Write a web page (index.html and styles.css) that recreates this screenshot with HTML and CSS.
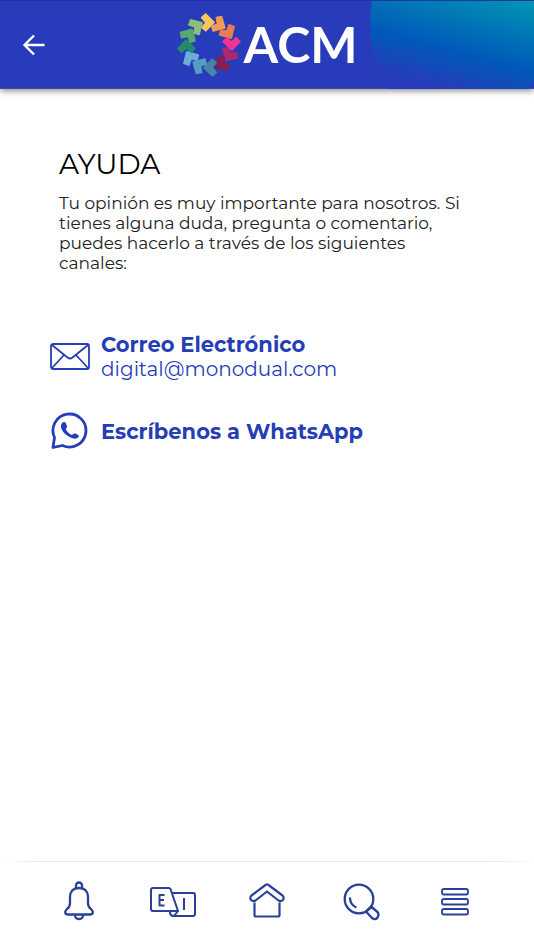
FILE: index.html
```html
<!DOCTYPE html>
<html lang="es">
<head>
  <meta charset="UTF-8">
  <meta name="viewport" content="width=device-width, initial-scale=1.0">
  <title>ACM - Ayuda</title>
  <link rel="stylesheet" href="styles.css">
</head>
<body>
  <header class="topbar">
    <svg class="topbar-shape" width="164" height="88" viewBox="0 0 164 88" aria-hidden="true">
      <defs>
        <linearGradient id="shape-fill" gradientUnits="userSpaceOnUse" x1="112" y1="-22" x2="82" y2="92">
          <stop offset="0" stop-color="#009db3"/>
          <stop offset="0.65" stop-color="#0059b9"/>
          <stop offset="1" stop-color="#283bba"/>
        </linearGradient>
      </defs>
      <ellipse cx="88" cy="23" rx="88" ry="109" fill="url(#shape-fill)"/>
    </svg>
    <button class="back" type="button" aria-label="Volver">
      <svg width="24" height="24" viewBox="0 0 24 24" fill="none" stroke="#fff" stroke-width="2.4">
        <path d="M22.500 12H3M12 2.500L2.500 12L12 21.500"/>
      </svg>
    </button>
    <div class="logo">
      <svg width="64" height="64" viewBox="20 22 192 192" aria-hidden="true">
        <defs>
          <path id="arrow" d="M107 23L133 48Q134 50 133 52L108 77Q106 79 104 77L93 66Q92 64 93 63L104 51L92 37Q91 35 92 34L105 23Q106 22 107 23Z"/>
        </defs>
        <use href="#arrow" fill="#f8c45c"/>
        <use href="#arrow" fill="#f19c56" transform="rotate(30 116 118)"/>
        <use href="#arrow" fill="#ea7c50" transform="rotate(60 116 118)"/>
        <use href="#arrow" fill="#ee3594" transform="rotate(90 116 118)"/>
        <use href="#arrow" fill="#ab2a6d" transform="rotate(120 116 118)"/>
        <use href="#arrow" fill="#84204f" transform="rotate(150 116 118)"/>
        <use href="#arrow" fill="#4685a5" transform="rotate(180 116 118)"/>
        <use href="#arrow" fill="#569dc4" transform="rotate(210 116 118)"/>
        <use href="#arrow" fill="#6badd8" transform="rotate(240 116 118)"/>
        <use href="#arrow" fill="#228b6b" transform="rotate(270 116 118)"/>
        <use href="#arrow" fill="#57a773" transform="rotate(300 116 118)"/>
        <use href="#arrow" fill="#8ebf78" transform="rotate(330 116 118)"/>
      </svg>
      <span class="logo-text">ACM</span>
    </div>
  </header>

  <main class="content">
    <h1>AYUDA</h1>
    <p class="intro">Tu opinión es muy importante para nosotros. Si tienes alguna duda, pregunta o comentario, puedes hacerlo a través de los siguientes canales:</p>

    <div class="channels">
      <a class="channel" href="mailto:digital@monodual.com">
        <svg width="42" height="40" viewBox="0 0 42 40" fill="none" stroke="#263eb5" stroke-width="1.8" stroke-linejoin="round">
          <rect x="2" y="7" width="38" height="25" rx="2"/>
          <path d="M3 8L18.500 20.500Q21 22.500 23.500 20.500L39 8M3 31L15 18M39 31L27 18"/>
        </svg>
        <span class="channel-text"><strong>Correo Electrónico</strong><span class="channel-detail">digital@monodual.com</span></span>
      </a>
      <a class="channel" href="https://wa.me/">
        <svg width="42" height="40" viewBox="0 0 42 40">
          <path d="M4 35.500L5.500 25.500A16.500 16.500 0 1 1 13.500 33.500Z" fill="none" stroke="#263eb5" stroke-width="2.800" stroke-linejoin="round"/>
          <path d="M13.500 10.500Q15 9.500 16.500 10.500L18 14Q18.300 15.500 16.800 17Q18.500 21 23 23Q24.500 21 26.500 21.500L29.500 23.200Q30.700 24.500 28.500 26Q25.500 27.500 21.500 25.500Q15 22.500 12.500 17Q11 12.500 13.500 10.500Z" fill="#263eb5"/>
        </svg>
        <span class="channel-text"><strong>Escríbenos a WhatsApp</strong></span>
      </a>
    </div>
  </main>

  <nav class="tabbar">
    <a href="#notificaciones" aria-label="Notificaciones">
      <svg width="48" height="42" viewBox="0 0 48 42" fill="none" stroke="#2a4198" stroke-width="2.3" stroke-linejoin="round">
        <path d="M21 8V5.500A3 3 0 0 1 27 5.500V8"/>
        <path d="M24 8C18 8 15 12 15 17V23Q15 27 12 29C9 32 10 34.500 13 34.500H35C38 34.500 39 32 36 29Q33 27 33 23V17C33 12 30 8 24 8Z"/>
        <path d="M20 35Q20 39 24 39T28 35"/>
      </svg>
    </a>
    <a href="#idioma" aria-label="Idioma">
      <svg width="48" height="42" viewBox="0 0 48 42" fill="none" stroke="#2a4198" stroke-width="2" stroke-linejoin="round">
        <path d="M4 8H19.500Q21 8 21.500 9L29 31H4Q2 31 2 29V10Q2 8 4 8Z"/>
        <path d="M23 13H44Q46 13 46 15V34Q46 36 44 36H24Q21 35.500 21 32M29 31L25 36"/>
        <path d="M15.500 15H10.500V25.500H15.500M10.500 20H15M35 18V30"/>
      </svg>
    </a>
    <a href="#inicio" aria-label="Inicio">
      <svg width="48" height="42" viewBox="0 0 48 42" fill="none" stroke="#2a4198" stroke-width="2.2" stroke-linejoin="round">
        <path d="M22.500 5Q24 3.800 25.500 5L39.500 15.500Q41.500 17.500 40 20Q38 22 35.500 20.500L24 11.500L12.500 20.500Q10 22 8 20Q6.500 17.500 8.500 15.500Z"/>
        <path d="M11.500 22.500V35Q11.500 36.500 13 36.500H35Q36.500 36.500 36.500 35V22.500"/>
      </svg>
    </a>
    <a href="#buscar" aria-label="Buscar">
      <svg width="48" height="42" viewBox="0 0 48 42" fill="none" stroke="#2a4198" stroke-width="2.3">
        <circle cx="22" cy="19" r="14.300"/>
        <path d="M13 18.500Q13.500 24.500 18.500 27" stroke-linecap="round"/>
        <path d="M29 31.500L34 26.500L40.500 32Q42.500 34.500 40.500 37.500T35 38Z" stroke-linejoin="round"/>
      </svg>
    </a>
    <a href="#menu" aria-label="Menú">
      <svg width="48" height="42" viewBox="0 0 48 42" fill="none" stroke="#2a4198" stroke-width="1.8">
        <rect x="11" y="9" width="26" height="5.500" rx="2"/>
        <rect x="11" y="19" width="26" height="5.500" rx="2"/>
        <rect x="11" y="29" width="26" height="5.500" rx="2"/>
      </svg>
    </a>
  </nav>
</body>
</html>
```
FILE: styles.css
```css
* {
  box-sizing: border-box;
}
body {
  font-family: 'Montserrat', 'Inter', Arial, sans-serif;
  margin: 0;
  min-height: 100vh;
  background: #fff;
  display: flex;
  flex-direction: column;
}
.topbar {
  position: relative;
  display: grid;
  grid-template-columns: 1fr auto 1fr;
  align-items: center;
  height: 89px;
  padding: 0 22px;
  background: #283bba;
  border-top: 1px solid #2433a0;
  border-bottom: 1px solid #3a4aa8;
  box-shadow: 0 2px 6px rgba(0, 0, 0, 0.45);
}
.topbar-shape {
  position: absolute;
  top: 0;
  right: 0;
}
.back {
  width: 24px;
  height: 24px;
  padding: 0;
  border: 0;
  background: none;
  cursor: pointer;
}
.back svg {
  display: block;
}
.logo {
  position: relative;
  display: flex;
  align-items: center;
  gap: 3px;
}
.logo-text {
  font-family: 'Lato', sans-serif;
  font-size: 50px;
  font-weight: 700;
  line-height: 62px;
  padding-bottom: 2px;
  color: #fff;
}
.content {
  flex: 1;
  padding: 56px 58px 0 59px;
}
h1 {
  margin: 0;
  font-size: 28px;
  font-weight: 400;
  line-height: 38px;
  color: #000;
}
.intro {
  margin: 10px 0 0;
  font-size: 17px;
  font-weight: 400;
  line-height: 20px;
  color: #222;
}
.channels {
  display: flex;
  flex-direction: column;
  gap: 27px;
  margin: 60px 0 0 -10px;
}
.channel {
  display: flex;
  align-items: center;
  gap: 10px;
  min-height: 48px;
  color: #263eb5;
  text-decoration: none;
}
.channel-text {
  display: flex;
  flex-direction: column;
  font-size: 21px;
  line-height: 24px;
}
.channel-text strong {
  font-weight: 700;
}
.channel-detail {
  font-size: 20px;
}
.tabbar {
  display: flex;
  height: 89px;
  padding: 0 32px;
  border-top: 1px solid;
  border-image: linear-gradient(to right, #fff, #e8e8e8 8%, #e8e8e8 92%, #fff) 1;
}
.tabbar a {
  flex: 1;
  display: flex;
  justify-content: center;
  padding-top: 18px;
}
```
